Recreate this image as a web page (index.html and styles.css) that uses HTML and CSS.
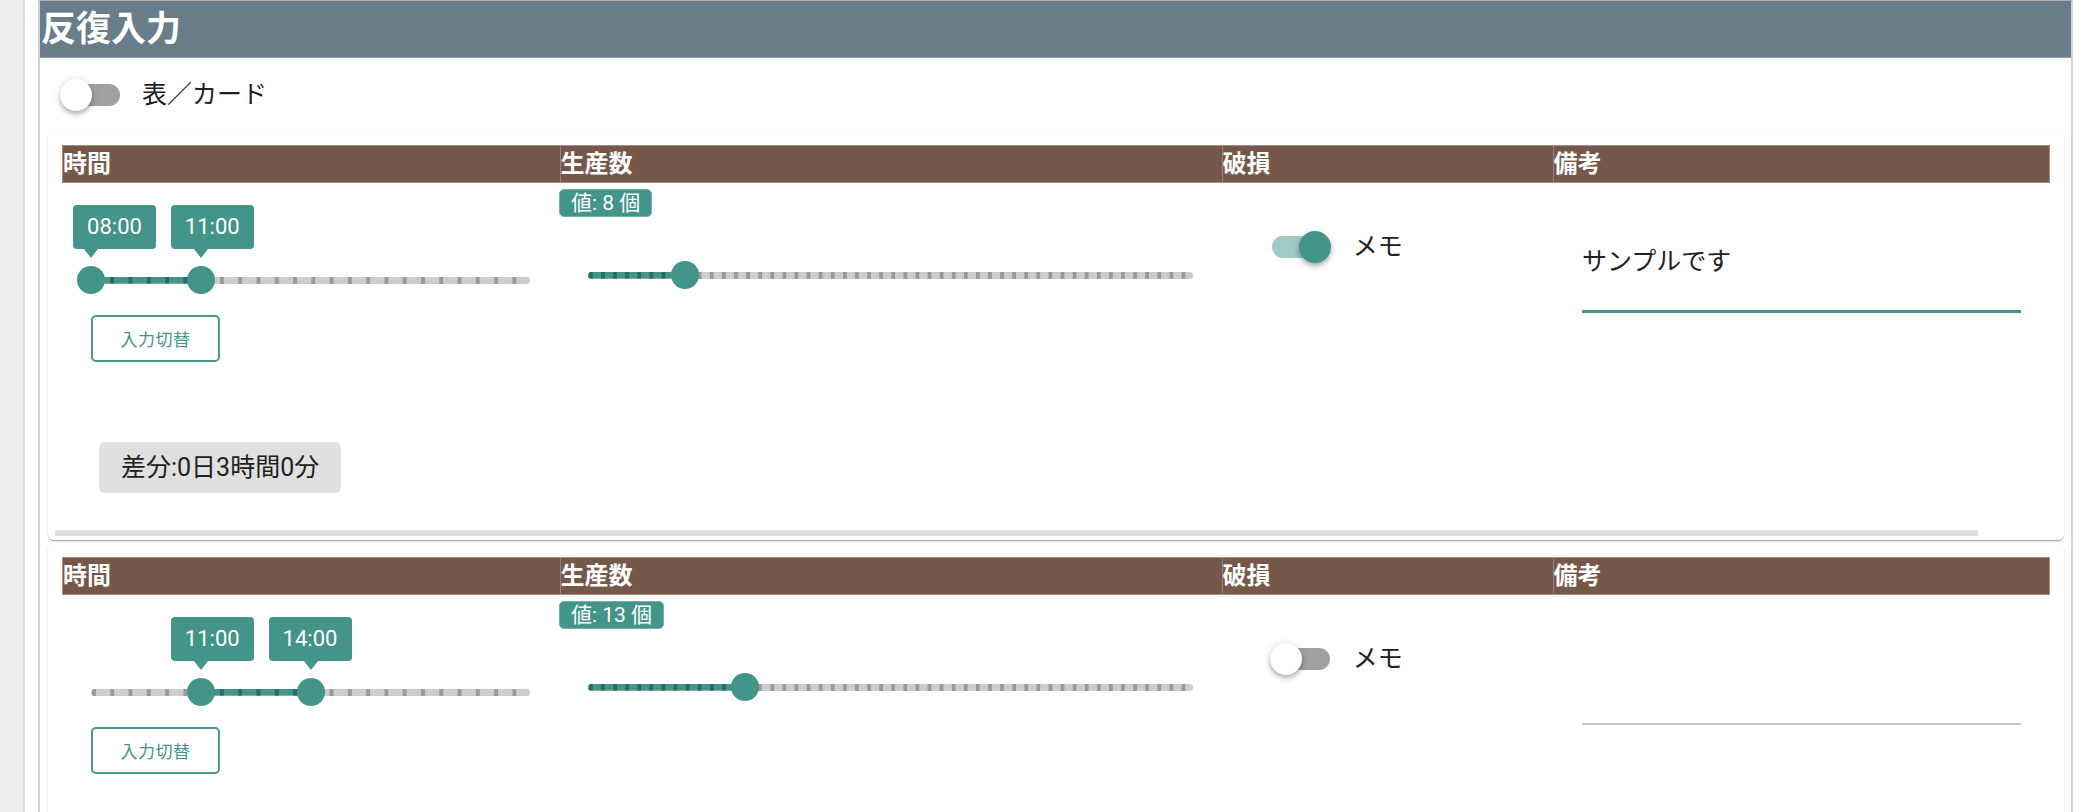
FILE: index.html
```html
<!DOCTYPE html>
<html lang="ja">
<head>
<meta charset="utf-8">
<title>反復入力</title>
<link rel="stylesheet" href="styles.css">
</head>
<body>
<div class="app">
  <aside class="side"></aside>
  <main class="main">
    <section class="panel">
      <h2 class="panel-title">反復入力</h2>
      <div class="view-toggle">
        <span class="switch"><span class="switch-track"></span><span class="switch-thumb"></span></span>
        <span class="switch-label">表／カード</span>
      </div>

      <div class="card">
        <div class="grid head">
          <div class="hcell">時間</div>
          <div class="hcell">生産数</div>
          <div class="hcell">破損</div>
          <div class="hcell">備考</div>
        </div>
        <div class="grid body">
          <div class="cell time-cell">
            <div class="range" style="--a:0;--b:0.25;--n:24">
              <div class="track"><div class="fill"></div></div>
              <div class="handle" style="--p:0"><div class="thumb"></div><div class="tlabel">08:00</div></div>
              <div class="handle" style="--p:0.25"><div class="thumb"></div><div class="tlabel">11:00</div></div>
            </div>
            <button class="mode-btn" type="button">入力切替</button>
            <div class="diff">差分:0日3時間0分</div>
          </div>
          <div class="cell count-cell">
            <span class="count">値: 8 個</span>
            <div class="range single" style="--a:0;--b:0.16;--n:50">
              <div class="track"><div class="fill"></div></div>
              <div class="handle" style="--p:0.16"><div class="thumb"></div></div>
            </div>
          </div>
          <div class="cell damage-cell">
            <span class="switch on"><span class="switch-track"></span><span class="switch-thumb"></span></span>
            <span class="switch-label">メモ</span>
          </div>
          <div class="cell note-cell">
            <div class="field focused"><span class="field-value">サンプルです</span></div>
          </div>
        </div>
        <div class="scrollbar"></div>
      </div>

      <div class="card">
        <div class="grid head">
          <div class="hcell">時間</div>
          <div class="hcell">生産数</div>
          <div class="hcell">破損</div>
          <div class="hcell">備考</div>
        </div>
        <div class="grid body">
          <div class="cell time-cell">
            <div class="range" style="--a:0.25;--b:0.5;--n:24">
              <div class="track"><div class="fill"></div></div>
              <div class="handle" style="--p:0.25"><div class="thumb"></div><div class="tlabel">11:00</div></div>
              <div class="handle" style="--p:0.5"><div class="thumb"></div><div class="tlabel">14:00</div></div>
            </div>
            <button class="mode-btn" type="button">入力切替</button>
            <div class="diff-space"></div>
          </div>
          <div class="cell count-cell">
            <span class="count">値: 13 個</span>
            <div class="range single" style="--a:0;--b:0.26;--n:50">
              <div class="track"><div class="fill"></div></div>
              <div class="handle" style="--p:0.26"><div class="thumb"></div></div>
            </div>
          </div>
          <div class="cell damage-cell">
            <span class="switch"><span class="switch-track"></span><span class="switch-thumb"></span></span>
            <span class="switch-label">メモ</span>
          </div>
          <div class="cell note-cell">
            <div class="field"><span class="field-value"></span></div>
          </div>
        </div>
        <div class="scrollbar"></div>
      </div>
    </section>
  </main>
</div>
</body>
</html>
```

FILE: styles.css
```css
* { box-sizing: border-box; }
html, body { margin: 0; padding: 0; }
body {
  font-family: Roboto, "Noto Sans CJK JP", sans-serif;
  color: #212121;
  background: #fff;
}
.app { display: flex; min-height: 100vh; }
.side {
  width: 25px;
  flex: none;
  background: #eeeeee;
  border-right: 2px solid #dcdcdc;
}
.main { flex: 1; padding: 0 11px 0 13px; }
.panel {
  min-height: 100%;
  border-left: 2px solid #d2d2d2;
  border-right: 2px solid #d2d2d2;
  border-top: 1px solid #b4b4b4;
  padding-bottom: 8px;
}
.panel-title {
  margin: 0;
  height: 57px;
  padding-left: 1px;
  background: #687c89;
  color: #fff;
  font-size: 35px;
  font-weight: 700;
  line-height: 57px;
  border-bottom: 1px solid #8d9ca6;
}
.view-toggle {
  height: 73px;
  display: flex;
  align-items: center;
  gap: 22px;
  padding-left: 22px;
}
.switch { position: relative; width: 58px; height: 32px; flex: none; }
.switch-track {
  position: absolute;
  left: 0; top: 5px;
  width: 58px; height: 22px;
  border-radius: 11px;
  background: #a0a0a0;
}
.switch-thumb {
  position: absolute;
  top: 0; left: -2px;
  width: 32px; height: 32px;
  border-radius: 50%;
  background: #fff;
  box-shadow: 0 2px 4px -1px rgba(0,0,0,.2), 0 4px 5px 0 rgba(0,0,0,.14), 0 1px 10px 0 rgba(0,0,0,.12);
}
.switch.on .switch-track { background: #a1cac4; }
.switch.on .switch-thumb { left: 27px; background: #439489; }
.switch-label { font-size: 25px; line-height: 32px; color: #212121; }

.card {
  margin: 0 7px 3px 8px;
  padding: 14px 14px 4px;
  background: #fff;
  border-radius: 6px;
  box-shadow: 0 2px 1px -1px rgba(0,0,0,.2), 0 1px 1px 0 rgba(0,0,0,.14), 0 1px 3px 0 rgba(0,0,0,.12);
}
.grid { display: grid; grid-template-columns: 3fr 4fr 2fr 3fr; }
.head {
  height: 38px;
  background: #76584b;
  border: 1px solid #a89086;
  color: #fff;
  font-weight: 700;
  font-size: 24px;
  line-height: 36px;
}
.hcell { white-space: nowrap; }
.hcell + .hcell { border-left: 1px solid #9c8276; }
.cell { display: flex; flex-direction: column; align-items: flex-start; min-width: 0; }

/* sliders */
.range {
  position: relative;
  align-self: stretch;
  height: 28px;
  margin: 83px 29px 0;
}
.range.single { margin-top: 44px; }
.track {
  position: absolute;
  left: 0; right: 0; top: 10.5px;
  height: 7px;
  border-radius: 4px;
  background: linear-gradient(90deg, #9a9a9a 0 3.5px, transparent 3.5px) 1px 0 / calc(100% / var(--n)) 100% repeat-x, #cdcdcd;
}
.fill {
  position: absolute;
  inset: 0;
  border-radius: 4px;
  background: linear-gradient(90deg, #2a6a60 0 3.5px, transparent 3.5px) 1px 0 / calc(100% / var(--n)) 100% repeat-x, #439489;
  clip-path: inset(0 calc((1 - var(--b)) * 100%) 0 calc(var(--a) * 100%));
}
.handle { position: absolute; inset: 0; }
.thumb {
  position: absolute;
  top: 0;
  left: calc(var(--p) * 100%);
  width: 28px; height: 28px;
  margin-left: -14px;
  border-radius: 50%;
  background: #439489;
}
.tlabel {
  position: absolute;
  bottom: 45px;
  left: calc(var(--p) * (100% - 48px) - 18px);
  width: 83px; height: 44px;
  border-radius: 4px;
  background: #439489;
  color: #fff;
  font-size: 22px;
  line-height: 44px;
  text-align: center;
}
.tlabel::after {
  content: "";
  position: absolute;
  top: 100%;
  left: calc(18px + var(--p) * 48px);
  margin-left: -7px;
  border-left: 7px solid transparent;
  border-right: 7px solid transparent;
  border-top: 9px solid #439489;
}

.mode-btn {
  margin: 21px 0 0 29px;
  width: 129px; height: 47px;
  padding: 0;
  border: 2px solid #4a978d;
  border-radius: 5px;
  background: #fff;
  color: #439489;
  font-family: inherit;
  font-size: 17px;
  letter-spacing: .5px;
}
.diff {
  margin: 80px 0 0 37px;
  height: 51px;
  padding: 0 22px;
  border-radius: 6px;
  background: #e0e0e0;
  color: #212121;
  font-size: 25px;
  line-height: 51px;
  white-space: nowrap;
}
.diff-space { height: 131px; }
.count {
  margin-top: 6px;
  height: 28px;
  padding: 0 11px;
  border-radius: 5px;
  background: #439489;
  border: 1px solid #6fb0a7;
  color: #fff;
  font-size: 21px;
  line-height: 26px;
  white-space: nowrap;
}
.damage-cell {
  flex-direction: row;
  align-items: center;
  gap: 23px;
  padding: 48px 0 0 50px;
  align-self: start;
}
.field {
  align-self: stretch;
  margin: 0 29px;
  padding: 64px 0 34px;
  border-bottom: 2px solid #c8c8c8;
}
.field.focused { padding-bottom: 33px; border-bottom: 3px solid #439489; }
.field-value { display: block; height: 30px; font-size: 25px; line-height: 30px; color: #212121; }
.scrollbar {
  height: 6px;
  margin: 37px 72px 0 -7px;
  background: #dddddd;
}
```
